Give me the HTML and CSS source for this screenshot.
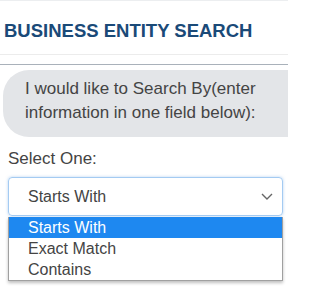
FILE: index.html
```html
<!DOCTYPE html>
<html>
<head>
<meta charset="utf-8">
<link rel="stylesheet" href="styles.css">
</head>
<body>
<div class="page">
  <header class="header">
    <h1 class="title">BUSINESS ENTITY SEARCH</h1>
  </header>
  <div class="rule"></div>
  <div class="bubble">I would like to Search By(enter information in one field below):</div>
  <label class="label">Select One:</label>
  <div class="select">
    <span class="select-value">Starts With</span>
    <svg class="chevron" width="12" height="7" viewBox="0 0 12 7"><path d="M1 1l5 5 5-5" fill="none" stroke="#666" stroke-width="1.4"/></svg>
  </div>
  <ul class="options">
    <li class="option selected">Starts With</li>
    <li class="option">Exact Match</li>
    <li class="option">Contains</li>
  </ul>
</div>
</body>
</html>
```
FILE: styles.css
```css
html, body {
  margin: 0;
  padding: 0;
  background: #fff;
  overflow: hidden;
}
.page {
  width: 288px;
  height: 288px;
  overflow: hidden;
  font-family: "Liberation Sans", Arial, sans-serif;
  border-top: 1px solid #eceef0;
  box-sizing: border-box;
}
.header {
  padding: 19px 0 0 4px;
  height: 34px;
  border-bottom: 1px solid #ececec;
}
.title {
  margin: 0;
  font-size: 18.5px;
  font-weight: bold;
  color: #1a4a78;
  line-height: 21px;
  white-space: nowrap;
}
.rule {
  margin-top: 9px;
  height: 1px;
  background: #a9b1ba;
}
.bubble {
  margin: 5px -40px 0 3px;
  background: #e3e5e8;
  border-radius: 26px;
  padding: 7px 20px 12px 22px;
  font-size: 17px;
  line-height: 24px;
  color: #444;
  height: 48px;
}
.label {
  display: block;
  margin: 12px 0 0 8px;
  font-size: 17px;
  line-height: 20px;
  color: #444;
}
.select {
  margin: 8px 0 0 8px;
  width: 275px;
  height: 39px;
  box-sizing: border-box;
  border: 1px solid #a4cbf2;
  border-radius: 4px;
  box-shadow: 0 0 3px rgba(110, 165, 230, 0.5);
  display: flex;
  align-items: center;
  justify-content: space-between;
  padding: 0 9px 0 19px;
  font-size: 16px;
  color: #444;
}
.select-value {
  padding-top: 1px;
}
.chevron {
  display: block;
}
.options {
  list-style: none;
  margin: 1px 0 0 8px;
  padding: 0;
  width: 275px;
  box-sizing: border-box;
  border: 1px solid #a0a0a0;
  border-top: none;
  box-shadow: 0 2px 3px rgba(0, 0, 0, 0.25);
  background: #fff;
}
.option {
  height: 21px;
  line-height: 21px;
  padding-left: 19px;
  font-size: 16px;
  color: #444;
}
.option.selected {
  background: #1e88f0;
  color: #fff;
}
```
